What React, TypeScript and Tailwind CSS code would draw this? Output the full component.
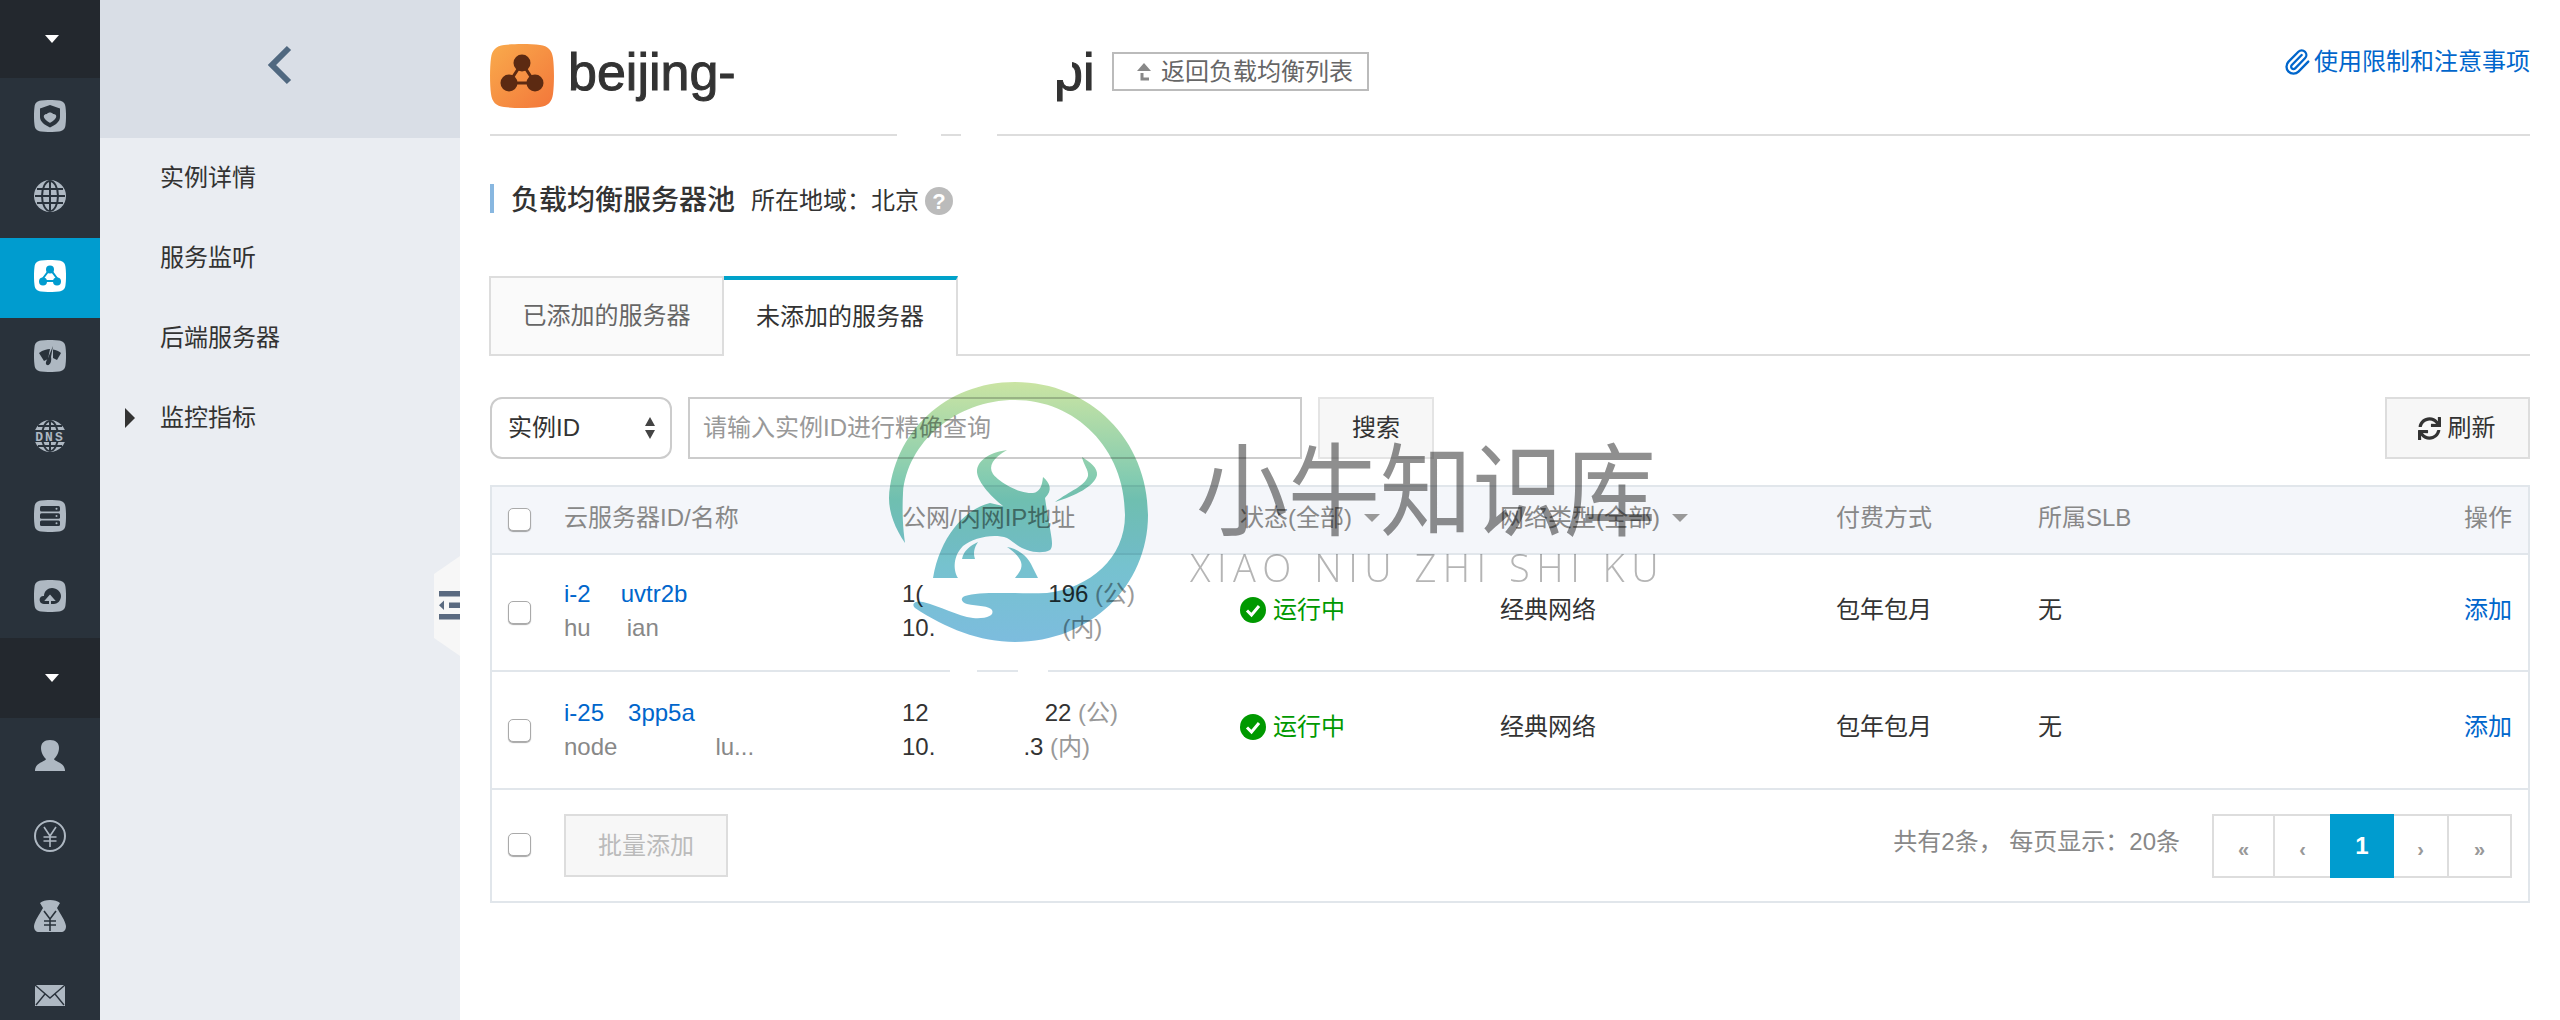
import { Paperclip } from 'lucide-react';
import { FaSync } from 'react-icons/fa';

const ICON = '#aeb8c2';
const DARK = '#29323b';

function Squircle({ fill = ICON, children }: { fill?: string; children: React.ReactNode }) {
  return (
    <svg width="32" height="32" viewBox="0 0 32 32">
      <path
        d="M7 0.5C12 -0.2 20 -0.2 25 0.5C29 1 31 3 31.5 7C32.2 12 32.2 20 31.5 25C31 29 29 31 25 31.5C20 32.2 12 32.2 7 31.5C3 31 1 29 0.5 25C-0.2 20 -0.2 12 0.5 7C1 3 3 1 7 0.5Z"
        fill={fill}
      />
      {children}
    </svg>
  );
}

function Plain({ children }: { children: React.ReactNode }) {
  return (
    <svg width="32" height="32" viewBox="0 0 32 32">
      {children}
    </svg>
  );
}

function Caret() {
  return (
    <svg width="14" height="8" viewBox="0 0 14 8" className="ml-[4px]">
      <path d="M0 0H14L7 8Z" fill="#fff" />
    </svg>
  );
}

function NavItem({ active, children }: { active?: boolean; children: React.ReactNode }) {
  return (
    <div className={`flex h-[80px] items-center justify-center pb-[4px] ${active ? 'bg-[#009ccf]' : ''}`}>
      {children}
    </div>
  );
}

function DarkItem() {
  return (
    <div className="flex h-[80px] items-center justify-center bg-[#23282e]">
      <Caret />
    </div>
  );
}

function Sidebar() {
  return (
    <aside className="h-[1020px] w-[100px] shrink-0 overflow-hidden bg-[#29323b]">
      <div className="flex h-[78px] items-center justify-center bg-[#23282e]">
        <Caret />
      </div>
      {/* shield */}
      <NavItem>
        <Squircle>
          <path d="M16 5L26 8.5V17C26 22 21 25 16 27.5C11 25 6 22 6 17V8.5Z" fill={DARK} />
          <path d="M10 17.5C9 14.5 12 14 13 14C14 12 18 12 19 14C21 14 23 15 22 17.5C20 21 17 22 16 23C15 22 12 21 10 17.5Z" fill={ICON} />
        </Squircle>
      </NavItem>
      {/* globe */}
      <NavItem>
        <Plain>
          <circle cx="16" cy="16" r="16" fill={ICON} />
          <ellipse cx="16" cy="16" rx="8" ry="15" fill="none" stroke={DARK} strokeWidth="2" />
          <path d="M16 1V31M3 9H29M1 16H31M3 23H29" stroke={DARK} strokeWidth="2" />
        </Plain>
      </NavItem>
      {/* load balancer */}
      <NavItem active>
        <Squircle fill="#fff">
          <path d="M16 9L7 21H25Z" fill="none" stroke="#009ccf" strokeWidth="2" />
          <circle cx="16" cy="9.5" r="4" fill="#009ccf" />
          <circle cx="9" cy="21.5" r="4" fill="#009ccf" />
          <circle cx="23" cy="21.5" r="4" fill="#009ccf" />
        </Squircle>
      </NavItem>
      {/* gauge */}
      <NavItem>
        <Squircle>
          <path d="M5 13C9 10 13 9 16 9L14 19L10 21Z" fill={DARK} />
          <path d="M19 9.5C22 10 25 11 27 13L23 20L19 18Z" fill={DARK} />
          <path d="M19 6L17 17C18 21 16 26 13 25C11 24 12 21 14 18Z" fill={DARK} />
        </Squircle>
      </NavItem>
      {/* dns */}
      <NavItem>
        <Plain>
          <circle cx="16" cy="16" r="16" fill={ICON} />
          <ellipse cx="16" cy="16" rx="8" ry="15" fill="none" stroke={DARK} strokeWidth="2" />
          <path d="M16 1V31M4 6H28M4 26H28" stroke={DARK} strokeWidth="2" />
          <rect x="0" y="10" width="32" height="12" fill={DARK} />
          <text x="16" y="21" textAnchor="middle" fontSize="13" fontFamily="Liberation Mono, monospace" letterSpacing="2" fill={ICON} fontWeight="700">
            DNS
          </text>
        </Plain>
      </NavItem>
      {/* server */}
      <NavItem>
        <Squircle>
          <rect x="6" y="6" width="20" height="5.5" rx="1.5" fill={DARK} />
          <rect x="6" y="13.2" width="20" height="5.5" rx="1.5" fill={DARK} />
          <rect x="6" y="20.5" width="20" height="5.5" rx="1.5" fill={DARK} />
          <circle cx="22.5" cy="8.7" r="1" fill={ICON} />
          <circle cx="22.5" cy="16" r="1" fill={ICON} />
          <circle cx="22.5" cy="23.2" r="1" fill={ICON} />
        </Squircle>
      </NavItem>
      {/* cloud upload */}
      <NavItem>
        <Squircle>
          <path d="M10 24C6 24 5 20 6 18C7 16 9 16 10 16C10 11 14 8 18 8C23 8 27 12 27 16C27 21 23 24 20 24Z" fill={DARK} />
          <path d="M16 25V18M12.5 20L16 16L19.5 20Z" stroke={ICON} strokeWidth="2" fill={ICON} />
        </Squircle>
      </NavItem>
      <DarkItem />
      {/* user */}
      <NavItem>
        <Plain>
          <path d="M16 0C22 0 25 3 25 8C25 13 22 17 20 19C21 22 30 22 31 30V31H1V30C2 22 11 22 12 19C10 17 7 13 7 8C7 3 10 0 16 0Z" fill={ICON} />
        </Plain>
      </NavItem>
      {/* yen */}
      <NavItem>
        <Plain>
          <circle cx="16" cy="16" r="15" fill="none" stroke={ICON} strokeWidth="2" />
          <path d="M10 7L16 16L22 7M16 16V27M9.5 17H22.5M9.5 21H22.5" fill="none" stroke={ICON} strokeWidth="1.6" />
        </Plain>
      </NavItem>
      {/* money bag */}
      <NavItem>
        <Plain>
          <path d="M6 3C10 -1 22 -1 26 3L23 8C27 15 31 20 32 26C32 30 30 32 27 32H5C2 32 0 30 0 26C1 20 5 15 9 8Z" fill={ICON} />
          <path d="M10 11L16 19L22 11M16 19V31M10 21H22M10 25H22" fill="none" stroke={DARK} strokeWidth="1.6" />
        </Plain>
      </NavItem>
      {/* mail */}
      <NavItem>
        <Plain>
          <rect x="1" y="5" width="30" height="21" fill={ICON} />
          <path d="M1 5L16 18L31 5M2 25L11 14M30 25L21 14" fill="none" stroke={DARK} strokeWidth="1.4" />
        </Plain>
      </NavItem>
    </aside>
  );
}

function SubNav() {
  const items = ['实例详情', '服务监听', '后端服务器', '监控指标'];
  return (
    <div className="relative h-[1020px] w-[360px] shrink-0 bg-[#eaedf2]">
      <div className="flex h-[138px] items-start justify-center bg-[#d9dee6] pt-[45px]">
        <svg width="26" height="40" viewBox="0 0 26 40">
          <path d="M22 3L5 20L22 37" fill="none" stroke="#506880" strokeWidth="6" />
        </svg>
      </div>
      {items.map((label, i) => (
        <div key={label} className="relative flex h-[80px] items-center pl-[60px] text-[24px] text-[#333]">
          {i === 3 && (
            <svg width="10" height="20" viewBox="0 0 10 20" className="absolute left-[25px] top-[30px]">
              <path d="M0 0L10 10L0 20Z" fill="#333" />
            </svg>
          )}
          {label}
        </div>
      ))}
      {/* collapse handle */}
      <svg width="26" height="100" viewBox="0 0 26 100" className="absolute right-0 top-[556px]">
        <path d="M26 0V100L0 82V18Z" fill="#f7f7f7" />
        <path d="M5 35H26V40.5H5ZM5 58H26V63.5H5ZM15 46.5H26V52H15Z" fill="#5a6a80" />
        <path d="M5 49.2L10 44.5V54Z" fill="#5a6a80" />
      </svg>
    </div>
  );
}

function PageHeader() {
  return (
    <div className="relative flex h-[136px] items-start border-b-2 border-[#ddd] pt-[44px]">
      <svg width="64" height="64" viewBox="0 0 64 64" className="shrink-0">
        <defs>
          <linearGradient id="logo" x1="0" y1="0" x2="1" y2="1">
            <stop offset="0" stopColor="#f9ab4c" />
            <stop offset="1" stopColor="#f3763a" />
          </linearGradient>
        </defs>
        <path d="M14 1C24 -0.3 40 -0.3 50 1C58 2 62 6 63 14C64.3 24 64.3 40 63 50C62 58 58 62 50 63C40 64.3 24 64.3 14 63C6 62 2 58 1 50C-0.3 40 -0.3 24 1 14C2 6 6 2 14 1Z" fill="url(#logo)" />
        <path d="M32 19L19 39H45Z" fill="none" stroke="#5c2a12" strokeWidth="3" />
        <circle cx="32" cy="19" r="8.5" fill="#5c2a12" />
        <circle cx="19" cy="39" r="8.5" fill="#5c2a12" />
        <circle cx="45" cy="39" r="8.5" fill="#5c2a12" />
      </svg>
      <span className="ml-[14px] w-[168px] shrink-0 text-[52px] leading-[56px] text-[#333] [-webkit-text-stroke:1px_#333]">beijing-</span>
      <span className="ml-[318px] w-[41px] shrink-0 text-[52px] leading-[56px] text-[#333] [-webkit-text-stroke:1px_#333]">pi</span>
      <div className="ml-[17px] mt-[8px] flex h-[39px] w-[257px] shrink-0 items-center border-2 border-[#bbb] pl-[22px] text-[24px] text-[#666]">
        <svg width="16" height="18" viewBox="0 0 16 18" className="mr-[9px]">
          <path d="M8 0L15 8H1Z" fill="#888" />
          <path d="M6 10V16H13" fill="none" stroke="#888" strokeWidth="3" />
        </svg>
        返回负载均衡列表
      </div>
      <a className="ml-auto mt-[4px] flex items-center text-[24px] leading-[28px] text-[#0066cc]">
        <Paperclip size={28} strokeWidth={2} className="mr-[3px]" />
        使用限制和注意事项
      </a>
      {/* white smudges left by the blurred name */}
      <span className="absolute left-[555px] top-[40px] h-[40px] w-[27px] bg-white" />
      <span className="absolute left-[407px] top-[130px] h-[8px] w-[44px] bg-white" />
      <span className="absolute left-[471px] top-[130px] h-[8px] w-[36px] bg-white" />
    </div>
  );
}

function SectionTitle() {
  return (
    <div className="mt-[48px] flex h-[29px] items-center border-l-4 border-[#88b7e0] pl-[17px]">
      <span className="pt-[5px] text-[28px] font-medium text-[#333]">负载均衡服务器池</span>
      <span className="ml-[16px] pt-[5px] text-[24px] text-[#333]">所在地域：北京</span>
      <span className="ml-[6px] mt-[5px] flex h-[28px] w-[28px] items-center justify-center rounded-full bg-[#bbb] text-[22px] font-bold text-white">
        ?
      </span>
    </div>
  );
}

function Tabs() {
  return (
    <div className="mt-[63px] flex h-[80px] text-[24px]">
      <div className="-ml-px flex w-[235px] items-center justify-center border-2 border-[#ddd] bg-[#fafafa] text-[#666]">
        已添加的服务器
      </div>
      <div className="flex w-[234px] items-center justify-center border-r-2 border-t-4 border-r-[#ddd] border-t-[#00a2ca] pb-[2px] text-[#333]">
        未添加的服务器
      </div>
      <div className="flex-1 border-b-2 border-[#ddd]" />
    </div>
  );
}

function Toolbar() {
  return (
    <div className="mt-[41px] flex h-[62px] text-[24px]">
      <div className="flex w-[182px] items-center justify-between rounded-[12px] border-2 border-[#ccc] pl-[16px] pr-[14px] text-[#333]">
        实例ID
        <svg width="12" height="24" viewBox="0 0 12 24">
          <path d="M6 1L11 10H1ZM6 23L11 14H1Z" fill="#444" />
        </svg>
      </div>
      <div className="ml-[16px] flex w-[614px] items-center border-2 border-[#ccc] pl-[13px] text-[#999]">
        请输入实例ID进行精确查询
      </div>
      <div className="ml-[16px] flex w-[116px] items-center justify-center border-2 border-[#e4e4e4] bg-[#f7f7f7] text-[#333]">
        搜索
      </div>
      <div className="ml-auto flex w-[145px] items-center justify-center border-2 border-[#ddd] bg-[#f7f7f7] pr-[2px] text-[#333]">
        <FaSync size={23} className="mr-[7px]" />
        刷新
      </div>
    </div>
  );
}

function Checkbox() {
  return (
    <span className="block h-[23px] w-[23px] rounded-[5px] border border-[#aaa] bg-white shadow-[0_1px_1px_rgba(0,0,0,0.35)]" />
  );
}

function Running() {
  return (
    <span className="flex items-center pb-[6px] text-[#090]">
      <svg width="26" height="26" viewBox="0 0 26 26" className="mr-[7px]">
        <circle cx="13" cy="13" r="13" fill="#090" />
        <path d="M7 13.5L11.5 18L19 9" fill="none" stroke="#fff" strokeWidth="3" />
      </svg>
      运行中
    </span>
  );
}

const gridCols = 'grid grid-cols-[72px_338px_338px_260px_336px_202px_1fr_100px] items-center';

type RowProps = {
  name: React.ReactNode;
  sub: React.ReactNode;
  pub: React.ReactNode;
  priv: React.ReactNode;
  h: string;
  lift?: boolean;
};

function Row({ name, sub, pub, priv, h, lift }: RowProps) {
  const lines = `leading-[34px] ${lift ? 'pb-[4px]' : ''}`;
  return (
    <div className={`${gridCols} ${h} border-b-2 border-[#e1e6eb] text-[24px] text-[#333]`}>
      <div className="pl-[16px]">
        <Checkbox />
      </div>
      <div className={lines}>
        <div className="text-[#0066cc]">{name}</div>
        <div className="text-[#888]">{sub}</div>
      </div>
      <div className={lines}>
        <div>{pub}</div>
        <div>{priv}</div>
      </div>
      <Running />
      <div className="pb-[6px]">经典网络</div>
      <div className="pb-[6px]">包年包月</div>
      <div className="pb-[6px]">无</div>
      <div className="pb-[6px] pr-[16px] text-right text-[#0066cc]">添加</div>
    </div>
  );
}

function Gap({ w }: { w: string }) {
  return <span className={`inline-block ${w}`} />;
}

function HeadCaret() {
  return (
    <svg width="16" height="8" viewBox="0 0 16 8" className="ml-[12px]">
      <path d="M0 0H16L8 8Z" fill="#999" />
    </svg>
  );
}

function ServerTable() {
  const pager = ['«', '‹', '1', '›', '»'];
  const pagerW = ['w-[61px]', 'w-[55px]', 'w-[64px]', 'w-[55px]', 'w-[61px]'];
  return (
    <div className="mt-[26px] border-x-2 border-b-2 border-[#e1e6eb]">
      <div className={`${gridCols} relative h-[70px] border-y-2 border-[#e1e6eb] bg-[#f4f6fa] pb-[4px] text-[24px] text-[#888]`}>
        <div className="pl-[16px] pt-[2px]">
          <Checkbox />
        </div>
        <div>云服务器ID/名称</div>
        <div>公网/内网IP地址</div>
        <div className="flex items-center">
          状态(全部)
          <HeadCaret />
        </div>
        <div className="flex items-center">
          网络类型(全部)
          <HeadCaret />
        </div>
        <div>付费方式</div>
        <div>所属SLB</div>
        <div className="pr-[16px] text-right">操作</div>
      </div>

      <div className="relative">
        <Row
          lift
          h="h-[117px]"
          name={<>i-2<Gap w="w-[30px]" />uvtr2b</>}
          sub={<>hu<Gap w="w-[36px]" />ian</>}
          pub={<>1(<Gap w="w-[125px]" />196 <span className="text-[#999]">(公)</span></>}
          priv={<>10.<Gap w="w-[127px]" /><span className="text-[#999]">(内)</span></>}
        />
        <span className="absolute left-[458px] top-[110px] h-[8px] w-[27px] bg-white" />
        <span className="absolute left-[526px] top-[110px] h-[8px] w-[30px] bg-white" />
      </div>
      <Row
        h="h-[118px]"
        name={<>i-25<Gap w="w-[24px]" />3pp5a</>}
        sub={<>node<Gap w="w-[98px]" />lu...</>}
        pub={<>12<Gap w="w-[116px]" />22 <span className="text-[#999]">(公)</span></>}
        priv={<>10.<Gap w="w-[88px]" />.3 <span className="text-[#999]">(内)</span></>}
      />

      <div className="flex h-[111px] items-start pt-[24px] text-[24px]">
        <div className="w-[72px] pl-[16px] pt-[19px]">
          <Checkbox />
        </div>
        <div className="flex h-[63px] w-[164px] items-center justify-center border-2 border-[#ddd] bg-[#f7f7f7] text-[#bbb]">
          批量添加
        </div>
        <div className="ml-auto pt-[10px] text-[#888]">共有2条， 每页显示：20条</div>
        <div className="ml-[32px] mr-[16px] flex h-[64px] border-2 border-[#ddd]">
          {pager.map((p, i) => (
            <div
              key={p}
              className={`flex items-center justify-center ${pagerW[i]} ${
                p === '1'
                  ? '-my-[2px] bg-[#009ccf] font-bold text-white'
                  : `pt-[6px] text-[20px] font-bold text-[#999] ${i === 0 || i === 3 ? 'border-r-2 border-[#ddd]' : ''}`
              }`}
            >
              {p}
            </div>
          ))}
        </div>
      </div>
    </div>
  );
}

function Watermark() {
  return (
    <div className="pointer-events-none absolute left-[885px] top-[378px] flex mix-blend-multiply">
      <svg width="270" height="270" viewBox="0 0 270 270" className="shrink-0">
        <defs>
          <linearGradient id="wm" gradientUnits="userSpaceOnUse" x1="0" y1="0" x2="0" y2="270">
            <stop offset="0" stopColor="#cde5a2" />
            <stop offset="0.45" stopColor="#74c6b4" />
            <stop offset="0.7" stopColor="#76c2cf" />
            <stop offset="1" stopColor="#7dbcdf" />
          </linearGradient>
        </defs>
        {/* ring and hand */}
        <path
          d="M20 165C10 150 4 135 4 120C8 55 60 4 130 4C205 4 263 62 263 137C263 208 205 264 130 264C95 264 60 250 30 230C26 226 30 222 38 224C55 228 72 238 88 240C100 241 110 238 107 232C105 228 92 228 82 226C76 224 75 220 80 218C95 213 130 216 162 215C205 210 240 180 240 137C240 70 190 22 130 22C70 22 22 65 18 115C17 135 18 150 20 165Z"
          fill="url(#wm)"
        />
        {/* cow */}
        <path
          d="M122 72C108 74 94 80 92 92C91 102 105 118 118 128L105 125C78 132 55 160 48 200H73C68 192 68 178 78 168C88 160 108 155 122 160C130 165 135 170 142 172C150 175 160 175 165 172C170 168 165 155 160 120C168 112 165 105 158 99C157 108 155 114 148 115C135 116 115 105 108 96C103 88 108 80 122 72Z"
          fill="url(#wm)"
        />
        <path d="M197 79C205 84 213 90 212 97C210 108 190 118 170 124C185 113 200 108 203 98C204 92 198 86 197 79Z" fill="url(#wm)" />
        {/* calf */}
        <path d="M93 164C85 168 79 172 77 181H90C88 175 89 170 93 164Z" fill="url(#wm)" />
        <path d="M122 169C132 170 142 178 146 186C149 192 151 196 153 200H130C134 195 138 190 136 184C134 178 128 173 122 169Z" fill="url(#wm)" />
      </svg>
      <div className="absolute left-[311px] top-[40px] w-[480px] font-['Noto_Sans_CJK_SC',sans-serif]">
        <div className="origin-top scale-y-110 whitespace-nowrap text-[92px] font-normal leading-[120px] text-[#8f8f8f]">小牛知识库</div>
        <div className="-ml-[6px] mt-[9px] whitespace-nowrap font-['Open_Sans',sans-serif] text-[38px] font-light leading-[40px] tracking-[6.5px] text-[#b5b5b5]">
          XIAO NIU ZHI SHI KU
        </div>
      </div>
    </div>
  );
}

export default function App() {
  return (
    <div className="relative flex h-[1020px] w-[2560px] overflow-hidden bg-white font-['Liberation_Sans','Noto_Sans_CJK_SC',sans-serif]">
      <Sidebar />
      <SubNav />
      <main className="flex-1 px-[30px]">
        <PageHeader />
        <SectionTitle />
        <Tabs />
        <Toolbar />
        <ServerTable />
      </main>
      <Watermark />
    </div>
  );
}
